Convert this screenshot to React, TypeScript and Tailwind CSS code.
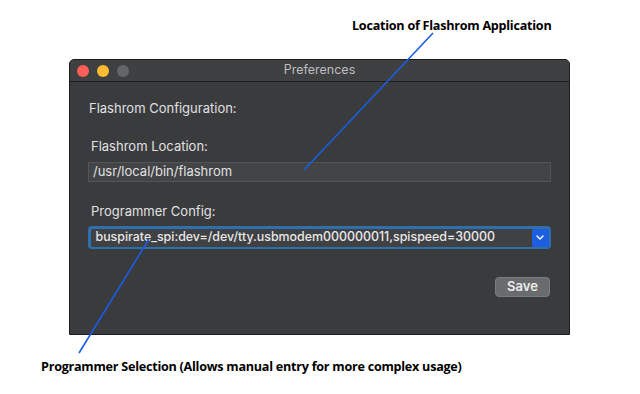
import React from "react";

const sans = { fontFamily: "Inter, 'Liberation Sans', sans-serif" };

function Annotation({ children }: { children: React.ReactNode }) {
  return (
    <span
      className="text-[12.6px] font-bold tracking-[-0.25px] text-black whitespace-nowrap"
      style={{ fontFamily: "'Open Sans', 'Liberation Sans', sans-serif" }}
    >
      {children}
    </span>
  );
}

function TrafficLights() {
  return (
    <div className="flex items-center gap-[8px]">
      <span className="w-[12px] h-[12px] rounded-full bg-[#fe5f57]" />
      <span className="w-[12px] h-[12px] rounded-full bg-[#febc2e]" />
      <span className="w-[12px] h-[12px] rounded-full bg-[#646567]" />
    </div>
  );
}

export default function App() {
  return (
    <div className="relative w-[640px] h-[394px] bg-white overflow-hidden">
      {/* top annotation */}
      <div className="h-[59px] pl-[352px] pt-[12px]">
        <Annotation>Location of Flashrom Application</Annotation>
      </div>

      {/* preferences window */}
      <div
        className="ml-[69px] w-[501px] h-[276px] flex flex-col rounded-t-[5px] border border-[#1c1c1e] bg-[#3a3b3d] overflow-hidden"
        style={sans}
      >
        <div className="relative h-[22px] flex items-center px-[7px] bg-[#3f4042] border-b border-[#1d1d1f]">
          <TrafficLights />
          <span className="absolute inset-x-0 text-center text-[12.5px] text-[#bcbdbf]">
            Preferences
          </span>
        </div>

        <div className="flex flex-col pl-[18px] pr-[18px] pt-[18px] text-[#e0e0e2]">
          <p className="text-[13px] leading-[16px] pl-[1px]">Flashrom Configuration:</p>

          <p className="text-[13px] leading-[16px] pl-[3px] mt-[22px]">Flashrom Location:</p>
          <div className="mt-[8px] h-[20px] flex items-center bg-[#434446] border border-[#535456] px-[4px] text-[13px]">
            /usr/local/bin/flashrom
          </div>

          <p className="text-[13px] leading-[16px] pl-[3px] mt-[21px]">Programmer Config:</p>
          <div className="mt-[7px] h-[23px] flex items-center rounded-[4px] bg-[#2f6fae] p-[2.5px]">
            <div className="flex-1 h-full flex items-center justify-between rounded-[2px] bg-[#404143] pl-[5px]">
              <span className="text-[12.4px] font-medium text-[#e8e8ea] whitespace-nowrap">
                buspirate_spi:dev=/dev/tty.usbmodem000000011,spispeed=30000
              </span>
              <span className="w-[17px] h-full flex items-center justify-center rounded-[2px] bg-[#1e5fe0]">
                <svg width="8" height="5" viewBox="0 0 8 5" fill="none">
                  <path d="M1 1l3 3 3-3" stroke="#fff" strokeWidth="1.4" strokeLinecap="round" strokeLinejoin="round" />
                </svg>
              </span>
            </div>
          </div>

          <div className="flex justify-end mt-[28px] pr-[1px]">
            <button className="w-[55px] h-[20px] rounded-[4px] bg-[#6a6b6d] border border-[#7a7b7d] text-[13px] font-semibold text-[#ececee] flex items-center justify-center">
              Save
            </button>
          </div>
        </div>
      </div>

      {/* bottom annotation */}
      <div className="pl-[41px] pt-[18px]">
        <Annotation>Programmer Selection (Allows manual entry for more complex usage)</Annotation>
      </div>

      {/* callout lines */}
      <svg className="absolute inset-0 pointer-events-none" width="640" height="394">
        <line x1="433" y1="33" x2="304" y2="170" stroke="#1a5ce6" strokeWidth="1.6" />
        <line x1="149" y1="239" x2="79" y2="353" stroke="#1a5ce6" strokeWidth="1.6" />
      </svg>
    </div>
  );
}
